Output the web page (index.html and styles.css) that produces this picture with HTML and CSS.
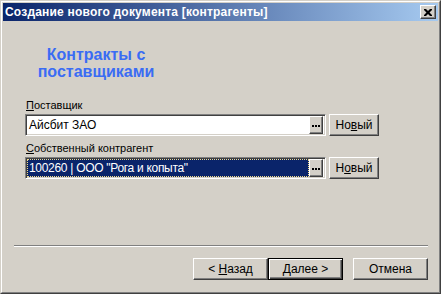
FILE: index.html
```html
<!DOCTYPE html>
<html lang="ru">
<head>
    <meta charset="UTF-8">
    <title>Создание нового документа [контрагенты]</title>
    <link rel="stylesheet" href="styles.css">
</head>
<body>

<div class="window">
    <div class="frame">
        <div class="titlebar">
            <span class="title">Создание нового документа [контрагенты]</span>
            <button class="close">
                <svg width="8" height="7" viewBox="0 0 8 7">
                    <path d="M0 0h2l2 2l2 -2h2v1l-2.5 2.5l2.5 2.5v1h-2l-2 -2l-2 2h-2v-1l2.5 -2.5l-2.5 -2.5z" fill="#000"/>
                </svg>
            </button>
        </div>

        <div class="content">
            <h1 class="heading">Контракты с<br>поставщиками</h1>

            <div class="field">
                <label class="label"><u>П</u>оставщик</label>
                <div class="row">
                    <div class="input">
                        <span class="value">Айсбит ЗАО</span>
                        <span class="dots">
                            <svg width="8" height="2" viewBox="0 0 8 2">
                                <rect x="0" y="0" width="2" height="2"/>
                                <rect x="3" y="0" width="2" height="2"/>
                                <rect x="6" y="0" width="2" height="2"/>
                            </svg>
                        </span>
                    </div>
                    <button class="btn btn-new">Но<u>в</u>ый</button>
                </div>
            </div>

            <div class="field">
                <label class="label"><u>С</u>обственный контрагент</label>
                <div class="row">
                    <div class="input">
                        <span class="value selected">100260 | ООО "Рога и копыта"</span>
                        <span class="dots">
                            <svg width="8" height="2" viewBox="0 0 8 2">
                                <rect x="0" y="0" width="2" height="2"/>
                                <rect x="3" y="0" width="2" height="2"/>
                                <rect x="6" y="0" width="2" height="2"/>
                            </svg>
                        </span>
                    </div>
                    <button class="btn btn-new">Н<u>о</u>вый</button>
                </div>
            </div>

            <div class="footer">
                <div class="separator"></div>
                <div class="buttons">
                    <button class="btn btn-wide">&lt; <u>Н</u>азад</button>
                    <button class="btn btn-wide btn-default"><u>Д</u>алее &gt;</button>
                    <button class="btn btn-wide btn-cancel">Отмена</button>
                </div>
            </div>
        </div>
    </div>
</div>

</body>
</html>
```

FILE: styles.css
```css
body {
    margin: 0;
    background-color: #d4d0c8;
    font-family: "Liberation Sans", Arial, sans-serif;
    font-size: 11px;
    color: #000;
}

.window {
    width: 441px;
    height: 294px;
    box-sizing: border-box;
    border: 1px solid;
    border-color: #d4d0c8 #404040 #404040 #d4d0c8;
}

.frame {
    height: 100%;
    box-sizing: border-box;
    border: 1px solid;
    border-color: #fff #808080 #808080 #fff;
    padding: 1px;
    display: flex;
    flex-direction: column;
}

.titlebar {
    height: 18px;
    display: flex;
    align-items: center;
    justify-content: space-between;
    padding: 0 2px 0 2px;
    background: linear-gradient(to right, #0a246a, #a6caf0);
}

.title {
    color: #fff;
    font-weight: bold;
    font-size: 12px;
    letter-spacing: 0.2px;
    white-space: nowrap;
}

.close {
    width: 16px;
    height: 14px;
    padding: 0;
    display: flex;
    align-items: center;
    justify-content: center;
    background-color: #d4d0c8;
    border: 1px solid;
    border-color: #fff #404040 #404040 #fff;
    box-shadow: inset -1px -1px #808080;
}

.content {
    flex: 1;
    display: flex;
    flex-direction: column;
    padding: 0 0 0 22px;
}

.heading {
    width: 142px;
    margin: 25px 0 19px;
    font-size: 16px;
    line-height: 17px;
    font-weight: bold;
    text-align: center;
    color: #3a6cf4;
}

.field {
    margin-bottom: 6px;
}

.label {
    display: block;
    line-height: 13px;
    margin-bottom: 2px;
    padding-left: 1px;
}

.row {
    display: flex;
    gap: 3px;
}

.input {
    width: 301px;
    height: 22px;
    box-sizing: border-box;
    display: flex;
    padding: 1px;
    background-color: #fff;
    border: 1px solid;
    border-color: #808080 #fff #fff #808080;
    box-shadow: inset 1px 1px #404040, inset -1px -1px #d4d0c8;
}

.value {
    flex: 1;
    padding-left: 2px;
    line-height: 18px;
    font-size: 12px;
    white-space: nowrap;
    overflow: hidden;
}

.selected {
    background-color: #0a246a;
    color: #fff;
    border: 1px dotted #f2dc8c;
    line-height: 16px;
    padding-left: 1px;
    letter-spacing: -0.3px;
}

.dots {
    width: 14px;
    box-sizing: border-box;
    margin-right: 1px;
    display: flex;
    align-items: center;
    justify-content: center;
    padding-top: 1px;
    background-color: #d4d0c8;
    border: 1px solid;
    border-color: #fff #404040 #404040 #fff;
    box-shadow: inset -1px -1px #808080;
}

.btn {
    height: 22px;
    padding: 0;
    box-sizing: border-box;
    font-family: "Liberation Sans", Arial, sans-serif;
    font-size: 12px;
    color: #000;
    background-color: #d4d0c8;
    border: 1px solid;
    border-color: #fff #404040 #404040 #fff;
    box-shadow: inset -1px -1px #808080;
}

.btn-new {
    width: 50px;
}

.footer {
    margin-top: auto;
    padding: 0 10px 11px 0;
}

.separator {
    margin-left: -11px;
    border-top: 1px solid #808080;
    border-bottom: 1px solid #fff;
}

.buttons {
    display: flex;
    justify-content: flex-end;
    margin-top: 11px;
}

.btn-wide {
    width: 75px;
}

.btn-default {
    border-color: #000;
    box-shadow: inset 1px 1px #fff, inset -1px -1px #404040, inset -2px -2px #808080;
}

.btn-cancel {
    margin-left: 10px;
}
```
